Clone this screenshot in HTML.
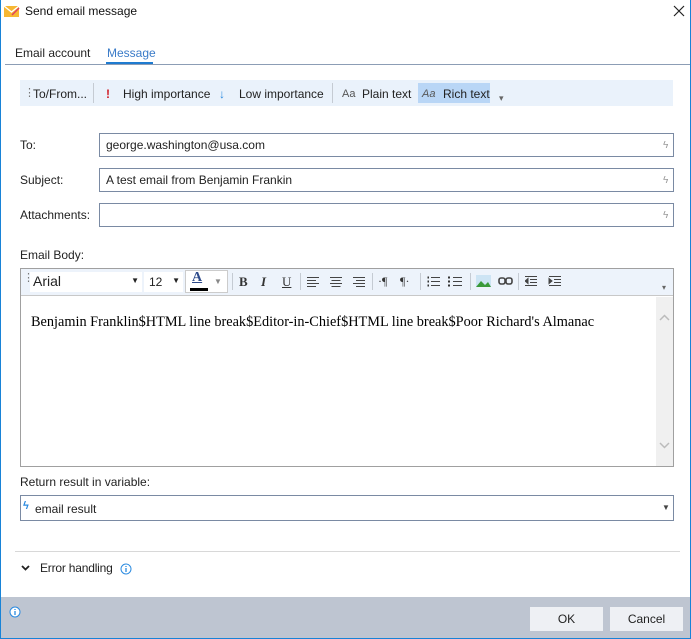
<!DOCTYPE html>
<html><head><style>
*{box-sizing:border-box;margin:0;padding:0}
body{width:691px;height:639px;position:relative;overflow:hidden;background:#fff;font-family:"Liberation Sans",sans-serif;font-size:12px;color:#222}
.a{position:absolute}
.win{left:0;top:0;width:691px;height:639px;border:1px solid #1883d7;border-top:none}
.inp{border:1px solid #7a8aa3;background:#fff;height:24px}
.bolt{position:absolute;right:5px;top:6px;width:5px;height:10px;color:#999;font-size:10px}
.tb span{position:absolute;top:0}
.sep{position:absolute;width:1px;background:#c5cbd3}
.ti{position:absolute;font-family:"Liberation Serif",serif;font-size:13px;color:#333}
</style></head><body>
<div class="a win"></div>
<svg class="a" style="left:4px;top:4px" width="16" height="14"><rect x="0" y="2" width="15" height="11" fill="#f7b733"/><path d="M0 2 L7.5 8 L15 2" stroke="#fff" fill="none" stroke-width="1.4"/><path d="M8 11 L15 4" stroke="#e04060" stroke-width="1.5"/></svg>
<div class="a" style="left:25px;top:4px;font-size:12px;color:#111">Send email message</div>
<svg class="a" style="left:673px;top:5px" width="12" height="12"><path d="M1 1L11 11M11 1L1 11" stroke="#222" stroke-width="1.2"/></svg>
<div class="a" style="left:15px;top:46px;font-size:12px;color:#222">Email account</div>
<div class="a" style="left:107px;top:46px;font-size:12px;color:#3a7bc8">Message</div>
<div class="a" style="left:5px;top:64px;width:685px;height:1px;background:#8c9db5"></div>
<div class="a" style="left:106px;top:62px;width:47px;height:2px;background:#1e7bd0"></div>

<div class="a tb" style="left:20px;top:80px;width:653px;height:26px;background:#eaf2fb;font-size:12px;line-height:28px">
<span style="left:4px;color:#777;font-size:11px;line-height:26px">⋮</span>
<span style="left:13px">To/From...</span>
<div class="sep" style="left:73px;top:3px;height:20px"></div>
<span style="left:86px;color:#d0202a;font-weight:bold">!</span>
<span style="left:103px">High importance</span>
<span style="left:199px;color:#2a8ae0;font-weight:bold">↓</span>
<span style="left:219px">Low importance</span>
<div class="sep" style="left:312px;top:3px;height:20px"></div>
<span style="left:322px;color:#555;font-size:11px">Aa</span>
<span style="left:342px">Plain text</span>
<div style="position:absolute;left:398px;top:3px;width:72px;height:20px;background:#b9d6f6"></div>
<span style="left:402px;color:#555;font-size:11px;font-style:italic">Aa</span>
<span style="left:423px">Rich text</span>
<span style="left:479px;color:#666;font-size:9px;top:4px">▾</span>
</div>

<div class="a" style="left:20px;top:138px;font-size:12px">To:</div>
<div class="a inp" style="left:99px;top:133px;width:575px;padding:4px 6px;font-size:12px">george.washington@usa.com<span class="bolt">ϟ</span></div>
<div class="a" style="left:20px;top:173px;font-size:12px">Subject:</div>
<div class="a inp" style="left:99px;top:168px;width:575px;padding:4px 6px;font-size:12px">A test email from Benjamin Frankin<span class="bolt">ϟ</span></div>
<div class="a" style="left:20px;top:208px;font-size:12px">Attachments:</div>
<div class="a inp" style="left:99px;top:203px;width:575px"><span class="bolt">ϟ</span></div>

<div class="a" style="left:20px;top:248px;font-size:12px">Email Body:</div>
<div class="a" style="left:20px;top:268px;width:654px;height:199px;border:1px solid #a0a0a0"></div>
<div class="a" style="left:21px;top:269px;width:652px;height:27px;background:#edf3fb;border-bottom:1px solid #c8c8c8"></div>
<div class="a" style="left:23px;top:271px;color:#777;font-size:11px">⋮</div>
<div class="a" style="left:30px;top:272px;width:112px;height:20px;background:#fff;font-size:14px;padding:1px 3px">Arial<span style="position:absolute;right:3px;top:4px;font-size:8px">▼</span></div>
<div class="a" style="left:144px;top:272px;width:39px;height:20px;background:#fff;font-size:12px;padding:3px 5px">12<span style="position:absolute;right:3px;top:4px;font-size:8px">▼</span></div>
<div class="a" style="left:185px;top:270px;width:43px;height:23px;background:#fff;border:1px solid #ccc"></div>
<div class="a" style="left:192px;top:270px;font-family:'Liberation Serif',serif;font-size:14px;font-weight:bold;color:#2d4a8a;text-decoration:underline">A</div>
<div class="a" style="left:190px;top:288px;width:18px;height:3px;background:#000"></div>
<div class="a" style="left:214px;top:277px;font-size:8px;color:#888">▼</div>
<div class="sep" style="left:232px;top:273px;height:17px"></div>
<div class="ti" style="left:239px;top:274px;font-weight:bold">B</div>
<div class="ti" style="left:261px;top:274px;font-style:italic;font-weight:bold">I</div>
<div class="ti" style="left:282px;top:274px;text-decoration:underline">U</div>
<div class="sep" style="left:300px;top:273px;height:17px"></div>
<svg class="a" style="left:307px;top:275px" width="70" height="13" stroke="#444" stroke-width="1"><path d="M0 2.5h12M0 5.5h9M0 8.5h12M0 11.5h9M23 2.5h12M24.5 5.5h9M23 8.5h12M24.5 11.5h9M46 2.5h12M49 5.5h9M46 8.5h12M49 11.5h9"/></svg>
<div class="sep" style="left:372px;top:273px;height:17px"></div>
<div class="ti" style="left:378px;top:274px;font-size:12px">·¶</div>
<div class="ti" style="left:400px;top:274px;font-size:12px">¶·</div>
<div class="sep" style="left:420px;top:273px;height:17px"></div>
<svg class="a" style="left:427px;top:275px" width="40" height="13" stroke="#444"><path d="M4 2.5h9M4 6.5h9M4 10.5h9M26 2.5h9M26 6.5h9M26 10.5h9"/><path d="M0.5 2.5h1.5M0.5 6.5h1.5M0.5 10.5h1.5M21 2.5h2M21 6.5h2M21 10.5h2" stroke="#333" stroke-width="2"/></svg>
<div class="sep" style="left:470px;top:273px;height:17px"></div>
<svg class="a" style="left:476px;top:275px" width="16" height="13"><rect x="0" y="0" width="15" height="12" fill="#cde4f4"/><path d="M0 12L5 6L9 10L12 7L15 12Z" fill="#3a9a3a"/></svg>
<svg class="a" style="left:498px;top:277px" width="16" height="9" fill="none" stroke="#444" stroke-width="1.6"><rect x="1" y="1" width="6" height="6" rx="2"/><rect x="8" y="1" width="6" height="6" rx="2"/></svg>
<div class="sep" style="left:518px;top:273px;height:17px"></div>
<svg class="a" style="left:525px;top:275px" width="40" height="13" stroke="#444"><path d="M0 1.5h12M5 4.5h7M5 7.5h7M0 10.5h12M24 1.5h12M29 4.5h7M29 7.5h7M24 10.5h12"/><path d="M3 3.5L0 6L3 8.5ZM24 3.5L27 6L24 8.5Z" fill="#444"/></svg>
<div class="a" style="left:662px;top:283px;font-size:8px;color:#666">▾</div>
<div class="a" style="left:656px;top:297px;width:17px;height:169px;background:#f0f0f0"></div>
<svg class="a" style="left:659px;top:314px" width="11" height="7"><path d="M1 6L5.5 1.5L10 6" stroke="#bbb" stroke-width="1.5" fill="none"/></svg>
<svg class="a" style="left:659px;top:442px" width="11" height="7"><path d="M1 1L5.5 5.5L10 1" stroke="#bbb" stroke-width="1.5" fill="none"/></svg>
<div class="a" style="left:31px;top:314px;font-family:'Liberation Serif',serif;font-size:14.3px;color:#000;white-space:nowrap">Benjamin Franklin$HTML line break$Editor-in-Chief$HTML line break$Poor Richard's Almanac</div>

<div class="a" style="left:20px;top:475px;font-size:12px">Return result in variable:</div>
<div class="a" style="left:20px;top:495px;width:654px;height:26px;border:1px solid #7a8aa3;padding:6px 14px;font-size:12px">email result</div>
<div class="a" style="left:23px;top:500px;color:#2a8ae0;font-size:11px;font-weight:bold">ϟ</div>
<div class="a" style="left:662px;top:503px;font-size:8px;color:#444">▼</div>
<div class="a" style="left:15px;top:551px;width:665px;height:1px;background:#d8d8d8"></div>
<svg class="a" style="left:21px;top:565px" width="9" height="6"><path d="M1 1L4.5 4.5L8 1" stroke="#222" stroke-width="1.8" fill="none"/></svg>
<div class="a" style="left:40px;top:561px;font-size:12px;letter-spacing:-0.2px">Error handling</div>
<svg class="a" style="left:120px;top:563px" width="12" height="12"><circle cx="6" cy="6" r="5" fill="none" stroke="#2a8ae0"/><path d="M6 5v4M6 3v1" stroke="#2a8ae0" stroke-width="1.3"/></svg>

<div class="a" style="left:1px;top:597px;width:689px;height:41px;background:#bec5d1"></div>
<svg class="a" style="left:9px;top:606px" width="12" height="12"><circle cx="6" cy="6" r="5" fill="#fff" stroke="#2a8ae0"/><path d="M6 5v4M6 3v1" stroke="#2a8ae0" stroke-width="1.3"/></svg>
<div class="a" style="left:530px;top:607px;width:73px;height:24px;background:#eef0f4;text-align:center;line-height:24px;font-size:12px">OK</div>
<div class="a" style="left:610px;top:607px;width:73px;height:24px;background:#eef0f4;text-align:center;line-height:24px;font-size:12px">Cancel</div>
</body></html>
